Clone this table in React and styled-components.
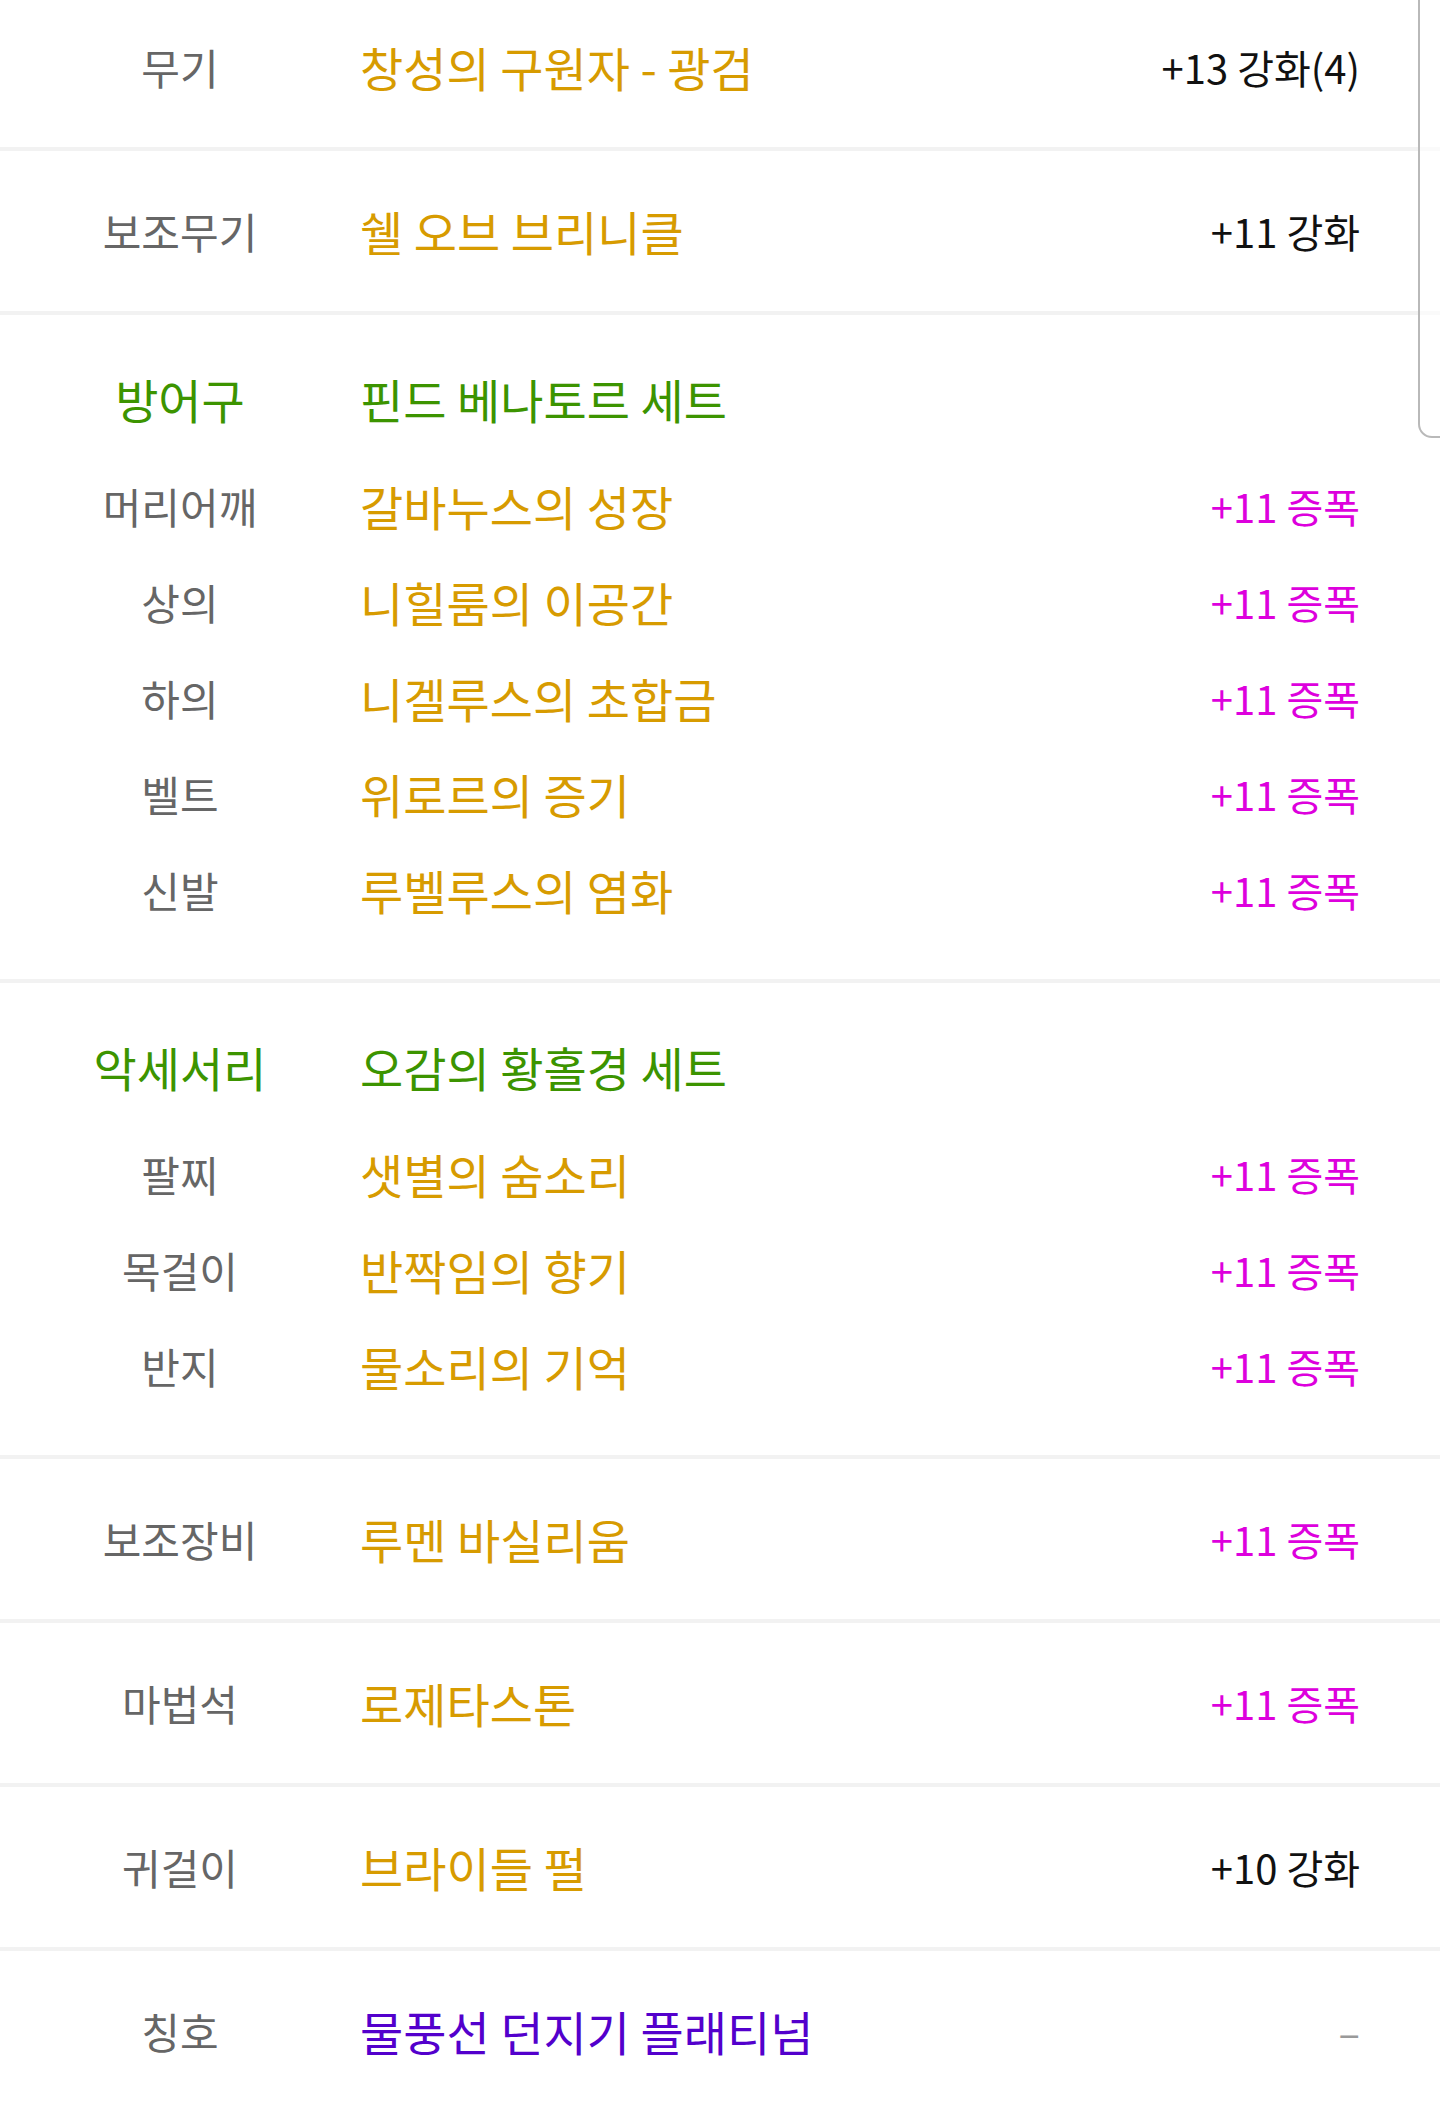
import React from 'react';
import styled, { createGlobalStyle } from 'styled-components';

const GlobalStyle = createGlobalStyle`
  html, body {
    margin: 0;
    padding: 0;
    background: #ffffff;
    overflow: hidden;
  }
  body {
    font-family: 'Noto Sans CJK KR', 'Noto Sans', sans-serif;
  }
`;

const Page = styled.div`
  position: relative;
  width: 1440px;
  height: 2106px;
  overflow: hidden;
  background: #ffffff;
`;

const List = styled.div`
  display: flex;
  flex-direction: column;
  margin-top: -13px;
`;

const Block = styled.section`
  display: flex;
  flex-direction: column;
  border-top: ${({ $first }) => ($first ? 'none' : '4px solid #f2f2f2')};
  padding: ${({ $group }) => ($group ? '36px 0 41px' : '0')};
`;

const Row = styled.div`
  display: grid;
  grid-template-columns: 360px 1fr auto;
  align-items: center;
  height: ${({ $h }) => $h}px;
  padding-right: 80px;
  margin-bottom: ${({ $gap }) => ($gap ? '11px' : '0')};
`;

const Label = styled.div`
  text-align: center;
  font-size: ${({ $head }) => ($head ? '47px' : '42px')};
  line-height: 1.2;
  color: ${({ $head }) => ($head ? '#3c9400' : '#666666')};
`;

const nameColors = {
  item: '#d79b00',
  set: '#3c9400',
  title: '#5300cc',
};

const Name = styled.div`
  font-size: 47px;
  line-height: 1.2;
  color: ${({ $kind }) => nameColors[$kind]};
  white-space: nowrap;
`;

const valueColors = {
  enhance: '#111111',
  amplify: '#dd00dd',
  none: '#9a9a9a',
};

const Value = styled.div`
  font-size: 40px;
  line-height: 1.2;
  text-align: right;
  white-space: nowrap;
  color: ${({ $kind }) => valueColors[$kind]};
`;

const ScrollThumb = styled.div`
  position: absolute;
  top: -20px;
  right: -20px;
  width: 38px;
  height: 454px;
  border: 2px solid #b9b9b9;
  border-radius: 14px;
  background: rgba(255, 255, 255, 0.6);
`;

const blocks = [
  { rows: [{ label: '무기', name: '창성의 구원자 - 광검', value: '+13 강화(4)', vk: 'enhance' }] },
  { rows: [{ label: '보조무기', name: '쉘 오브 브리니클', value: '+11 강화', vk: 'enhance' }] },
  {
    group: true,
    head: { label: '방어구', name: '핀드 베나토르 세트' },
    rows: [
      { label: '머리어깨', name: '갈바누스의 성장', value: '+11 증폭', vk: 'amplify' },
      { label: '상의', name: '니힐룸의 이공간', value: '+11 증폭', vk: 'amplify' },
      { label: '하의', name: '니겔루스의 초합금', value: '+11 증폭', vk: 'amplify' },
      { label: '벨트', name: '위로르의 증기', value: '+11 증폭', vk: 'amplify' },
      { label: '신발', name: '루벨루스의 염화', value: '+11 증폭', vk: 'amplify' },
    ],
  },
  {
    group: true,
    head: { label: '악세서리', name: '오감의 황홀경 세트' },
    rows: [
      { label: '팔찌', name: '샛별의 숨소리', value: '+11 증폭', vk: 'amplify' },
      { label: '목걸이', name: '반짝임의 향기', value: '+11 증폭', vk: 'amplify' },
      { label: '반지', name: '물소리의 기억', value: '+11 증폭', vk: 'amplify' },
    ],
  },
  { rows: [{ label: '보조장비', name: '루멘 바실리움', value: '+11 증폭', vk: 'amplify' }] },
  { rows: [{ label: '마법석', name: '로제타스톤', value: '+11 증폭', vk: 'amplify' }] },
  { rows: [{ label: '귀걸이', name: '브라이들 펄', value: '+10 강화', vk: 'enhance' }] },
  { rows: [{ label: '칭호', name: '물풍선 던지기 플래티넘', nk: 'title', value: '–', vk: 'none' }] },
];

export default function App() {
  return (
    <Page>
      <GlobalStyle />
      <List>
        {blocks.map((block, i) => (
          <Block key={i} $first={i === 0} $group={block.group}>
            {block.head && (
              <Row $h={96} $gap>
                <Label $head>{block.head.label}</Label>
                <Name $kind="set">{block.head.name}</Name>
                <span />
              </Row>
            )}
            {block.rows.map((r) => (
              <Row key={r.label} $h={block.group ? 96 : 160}>
                <Label>{r.label}</Label>
                <Name $kind={r.nk || 'item'}>{r.name}</Name>
                <Value $kind={r.vk}>{r.value}</Value>
              </Row>
            ))}
          </Block>
        ))}
      </List>
      <ScrollThumb />
    </Page>
  );
}
